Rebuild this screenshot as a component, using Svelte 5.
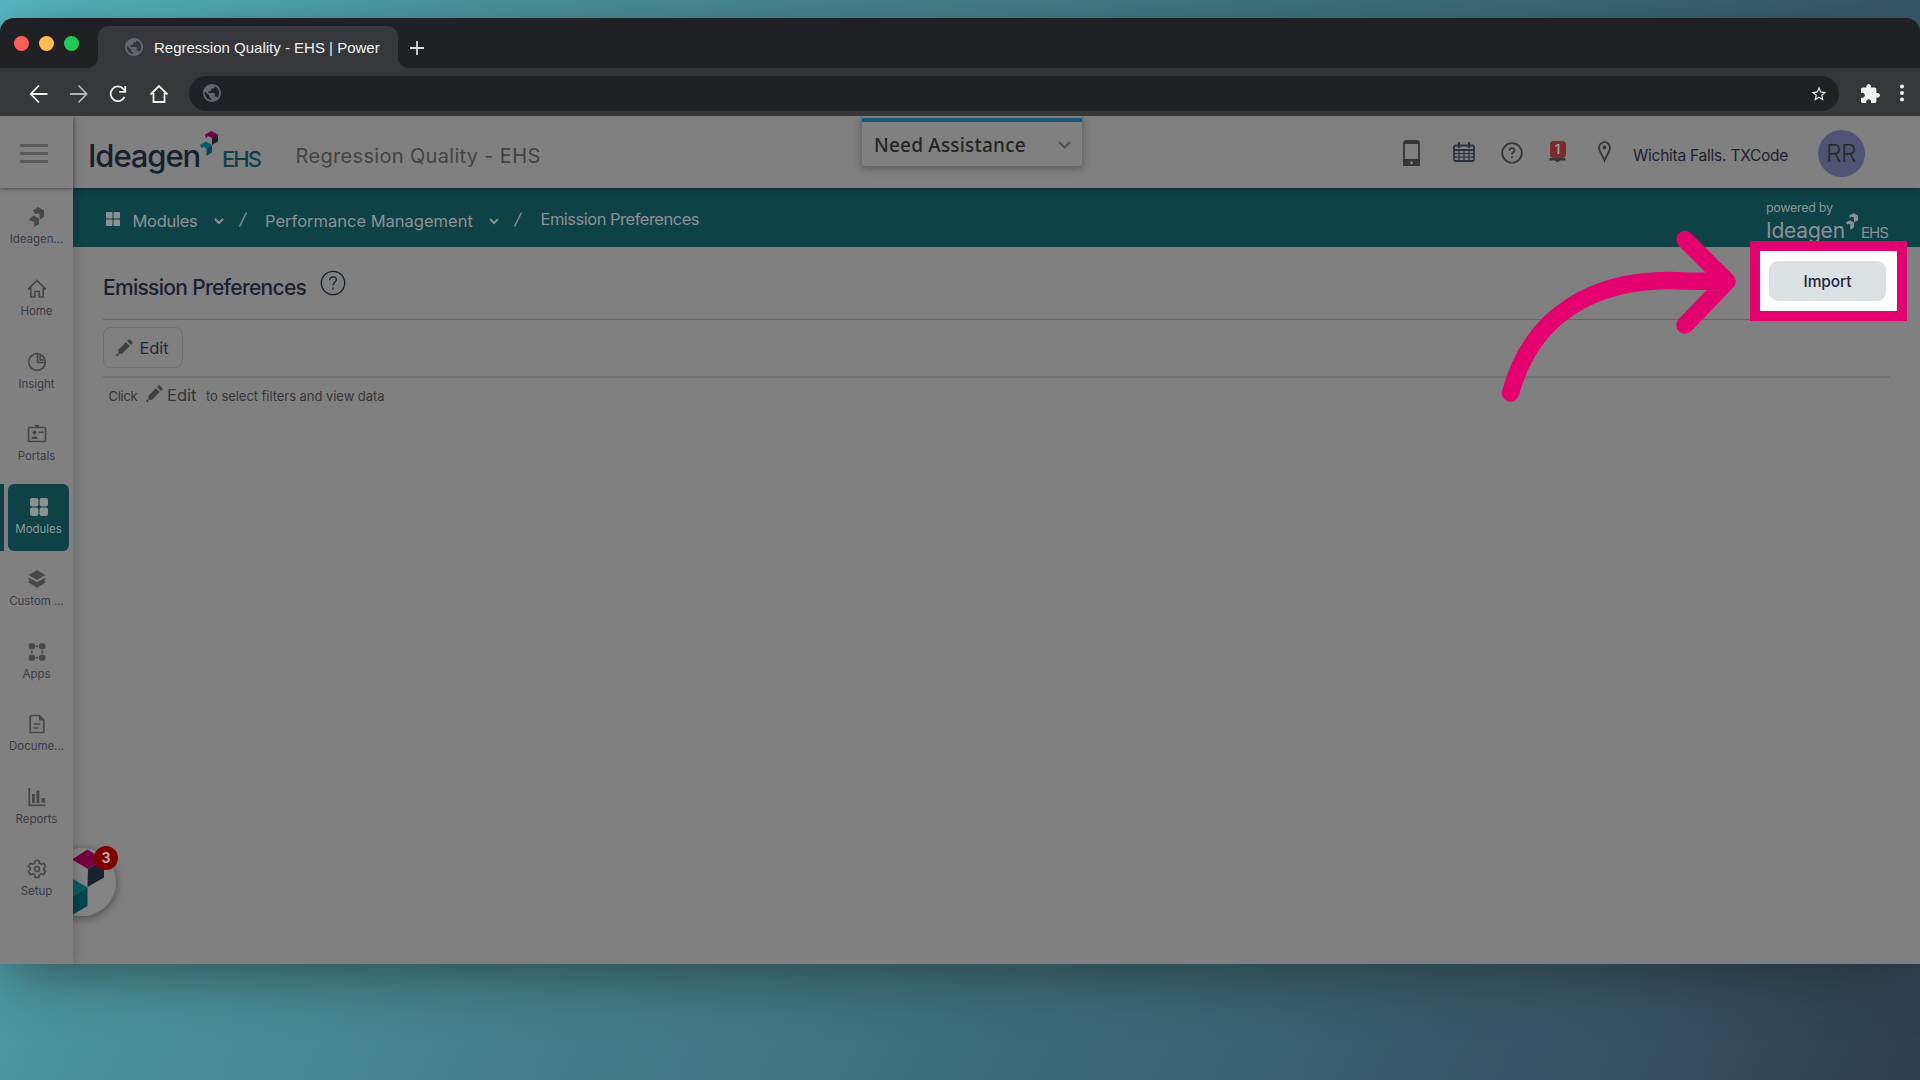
<script>
  let tabTitle = "Regression Quality - EHS | Power";
  let siteTitle = "Regression Quality - EHS";
  let siteName = "Wichita Falls. TXCode";

  const navItems = [
    { label: "Ideagen...", icon: "brand" },
    { label: "Home", icon: "home" },
    { label: "Insight", icon: "insight" },
    { label: "Portals", icon: "portals" },
    { label: "Modules", icon: "modules", active: true },
    { label: "Custom ...", icon: "layers" },
    { label: "Apps", icon: "apps" },
    { label: "Docume...", icon: "document" },
    { label: "Reports", icon: "reports" },
    { label: "Setup", icon: "setup" }
  ];
</script>

{#snippet globe()}
  <svg class="globe" viewBox="2 2 20 20">
    <path d="M12 2C6.48 2 2 6.48 2 12s4.48 10 10 10 10-4.48 10-10S17.52 2 12 2zm-1 17.93c-3.95-.49-7-3.85-7-7.93 0-.62.08-1.21.21-1.79L9 15v1c0 1.1.9 2 2 2v1.930zm6.900-2.540c-.26-.81-1-1.390-1.900-1.390h-1v-3c0-.55-.45-1-1-1H8v-2h2c.55 0 1-.45 1-1V7h2c1.100 0 2-.9 2-2v-.41c2.930 1.190 5 4.060 5 7.410 0 2.080-.8 3.970-2.100 5.390z" />
  </svg>
{/snippet}

{#snippet pencil()}
  <svg class="pencil" viewBox="0 0 18 18">
    <path d="M2.500 11.500 10.500 3.500l4 4-8 8H2.500z M11.700 2.300l1.800-1.800c.4-.4.9-.4 1.300 0l2.700 2.700c.4.4.4.9 0 1.300l-1.800 1.800z M.3 15.700h2.200v2.200H.3z" />
  </svg>
{/snippet}

{#snippet mark(kind)}
  <svg class="mark {kind}" viewBox="0 0 18 25">
    <path class="a" d="M5 3.500 11.500 0 18 3.500 12 7l-4-2-2 2.500z" />
    <path class="b" d="M12 7l6-3.500v7L12 14z" />
    <path class="c" d="M0 14l6-3.500L12 14l-5.500 3.500-3-1.500L2 17.500z" />
    <path class="d" d="M6.500 17.500 12 14v7.500L6.500 25z" />
  </svg>
{/snippet}

<div class="page">
  <div class="window">
    <div class="tabs">
      <div class="lights">
        <span class="red"></span>
        <span class="yellow"></span>
        <span class="green"></span>
      </div>
      <div class="tab">
        {@render globe()}
        <span>{tabTitle}</span>
      </div>
      <svg class="plus" viewBox="0 0 14 14"><path d="M7 0v14M0 7h14" /></svg>
    </div>

    <div class="toolbar">
      <svg class="tool" viewBox="0 0 20 20"><path d="M18.500 10H2.500M10 1.500 1.800 10l8.200 8.500" /></svg>
      <svg class="tool muted" viewBox="0 0 20 20"><path d="M1 10h16M9.500 1.500l8.200 8.500-8.200 8.500" /></svg>
      <svg class="tool" viewBox="0 0 20 20"><path d="M15.500 13a7.300 7.300 0 1 1-1.200-8.200L16 6.500M16.300 2v5.800h-6" /></svg>
      <svg class="tool" viewBox="0 0 20 20"><path d="M4.500 9v9h11V9M1.500 10.500 10 2l8.500 8.500" /></svg>
      <div class="address">
        {@render globe()}
        <svg class="star" viewBox="0 0 24 24"><path d="M22 9.240l-7.190-.62L12 2 9.190 8.630 2 9.240l5.460 4.730L5.820 21 12 17.270 18.180 21l-1.630-7.030L22 9.240zM12 15.400l-3.760 2.270 1-4.280-3.320-2.880 4.380-.38L12 6.100l1.710 4.040 4.380.38-3.320 2.880 1 4.280L12 15.400z" /></svg>
      </div>
      <svg class="puzzle" viewBox="2 1 21 21"><path d="M20.500 11H19V7c0-1.100-.9-2-2-2h-4V3.500C13 2.120 11.880 1 10.500 1S8 2.120 8 3.500V5H4c-1.100 0-1.990.9-1.990 2v3.800H3.500c1.490 0 2.700 1.210 2.700 2.700s-1.210 2.700-2.700 2.700H2V20c0 1.100.9 2 2 2h3.800v-1.500c0-1.490 1.210-2.700 2.700-2.700 1.490 0 2.700 1.210 2.700 2.700V22H17c1.100 0 2-.9 2-2v-4h1.500c1.380 0 2.500-1.120 2.500-2.500S21.880 11 20.500 11z" /></svg>
      <svg class="dots" viewBox="0 0 4 18"><circle cx="2" cy="2.5" r="2" /><circle cx="2" cy="9" r="2" /><circle cx="2" cy="15.5" r="2" /></svg>
    </div>

    <div class="app">
      <nav class="sidebar">
        <div class="toggle"><i></i><i></i><i></i></div>
        {#each navItems as item}
          <div class="nav-item" class:active={item.active}>
            <div class="nav-box">
              <svg class="nav-icon" viewBox="0 0 20 20">
                {#if item.icon === "brand"}
                  <path d="M6 3.500 11 0l6 3.500v6.200l-4.500 3V6.500L8 7z" />
                  <path d="M2 12.500l4.500-4 5.500 3.300V17l-4.700 3v-5.500L3 14z" />
                {:else if item.icon === "home"}
                  <path class="line" d="M1.200 10.200 10 1.500l8.800 8.700M3.800 8.500V18h4v-5.500h4.400V18h4V8.500M1.200 10.200h2.600M16.200 10.200h2.600" />
                {:else if item.icon === "insight"}
                  <circle class="line" cx="10" cy="10" r="8.300" />
                  <path class="line" d="M10.500 1.800v8.700h8M13.200 3v4.800h4.300" />
                {:else if item.icon === "portals"}
                  <rect class="line" x="1.500" y="3.500" width="17" height="14" rx="1" />
                  <path d="M8 1h4v3H8zM4.500 14.500c0-3 6-3 6 0v.5h-6zM11.500 7.500h5V9h-5z" />
                  <circle cx="7.500" cy="8.500" r="2" />
                {:else if item.icon === "modules"}
                  <rect x="1" y="1" width="8.400" height="8.400" rx="2" />
                  <rect x="10.600" y="1" width="8.400" height="8.400" rx="2" />
                  <rect x="1" y="10.600" width="8.400" height="8.400" rx="2" />
                  <rect x="10.600" y="10.600" width="8.400" height="8.400" rx="2" />
                {:else if item.icon === "layers"}
                  <path d="M10 1.200 18.500 6 10 11 1.500 6zM1.500 8.500 10 13.200l8.500-4.700v1.700L10 15.200l-8.500-5zM1.500 12l2-.8 6.500 3.800 6.500-3.800 2 .8v1.500L10 18.800l-8.500-5.300z" />
                {:else if item.icon === "apps"}
                  <path d="M3 1.300h3.500L8 2.800v3L6.500 7.300H3L1.500 5.800v-3zM13.500 1.300H17l1.500 1.500v3L17 7.300h-3.500L12 5.800v-3zM3 12.700h3.500L8 14.200v3l-1.500 1.500H3l-1.500-1.500v-3zM13.500 12.700H17l1.500 1.500v3L17 18.700h-3.500L12 17.200v-3z" />
                  <path class="line" d="M8.800 4.300h2.400M8.800 15.700h2.400M4.800 8.500v3M15.200 8.500v3" />
                {:else if item.icon === "document"}
                  <path class="line" d="M4.500 1.500h8l4.300 4.300v12.700H3.200V2.500z" />
                  <path d="M12 1l5.500 5.500H12z" />
                  <path class="line" d="M6.500 10h7M6.500 14h5" />
                {:else if item.icon === "reports"}
                  <path class="line" d="M2.300 1v17.300h16.200" />
                  <path d="M5 7h2.800v9H5zM9.500 3.500h2.800V16H9.500zM14.500 11h3.500v4.500h-3.500z" />
                {:else}
                  <path class="line" d="M8.200 1.500h3.600l.6 2.600 1.900 1.100 2.500-.8 1.800 3.100-1.900 1.800v1.400l1.900 1.800-1.800 3.100-2.500-.8-1.900 1.100-.6 2.600H8.200l-.6-2.600-1.900-1.100-2.500.8-1.800-3.100 1.900-1.800V9.300L1.400 7.500l1.800-3.100 2.500.8 1.900-1.100z" />
                  <circle class="line" cx="10" cy="10" r="2.500" />
                {/if}
              </svg>
              <span>{item.label}</span>
            </div>
          </div>
        {/each}
      </nav>

      <div class="body">
        <header class="header">
          <div class="logo">
            <span class="name">Ideagen</span>
            {@render mark("colour")}
            <span class="ehs">EHS</span>
          </div>
          <span class="site-title">{siteTitle}</span>

          <div class="header-icons">
            <svg class="phone" viewBox="0 0 17 26">
              <rect x="1" y="1" width="15" height="24" rx="2" />
              <path d="M1 3h15M6 2h5" />
              <path class="fill" d="M1 20h15v5H1z" />
              <circle cx="8.500" cy="22.700" r="1.500" />
            </svg>
            <svg class="calendar" viewBox="0 0 22 20">
              <rect x="1" y="3.500" width="20" height="15.500" rx="1.500" />
              <path d="M1 8h20M6 0v6M16 0v6" />
              <path class="thin" d="M1 11.500h20M1 15.200h20M6 8v11M11 8v11M16 8v11" />
            </svg>
            <svg class="help" viewBox="0 0 22 22">
              <circle cx="11" cy="11" r="9.800" />
              <path d="M8.300 8.800c.2-3.600 5.600-3.400 5.300-.2-.2 1.700-2.600 1.700-2.600 3.800M11 14.200v1.800" />
            </svg>
            <div class="bell">
              <span>1</span>
              <svg viewBox="0 0 17 5"><path d="M1 0h15l1 2.500h-6Q8.500 6 6 2.500H0z" /></svg>
            </div>
            <svg class="pin" viewBox="0 0 13 21">
              <path d="M6.500 19.500C4.500 13.500 1 11 1 6.700a5.500 5.500 0 0 1 11 0c0 4.300-3.500 6.800-5.500 12.800z" />
              <circle cx="6.500" cy="6.500" r="1" />
            </svg>
          </div>
          <span class="site-name">{siteName}</span>
          <div class="avatar">RR</div>

          <div class="assist">
            <span>Need Assistance</span>
            <svg viewBox="0 0 13 8"><path d="M1 1l5.500 5.500L12 1" /></svg>
          </div>
        </header>

        <div class="crumbs">
          <svg class="grid" viewBox="0 0 14 14">
            <rect width="6.500" height="6.500" rx="1" /><rect x="7.500" width="6.500" height="6.500" rx="1" />
            <rect y="7.500" width="6.500" height="6.500" rx="1" /><rect x="7.500" y="7.500" width="6.500" height="6.500" rx="1" />
          </svg>
          <span class="crumb first">Modules</span>
          <svg class="chev" viewBox="0 0 10 7"><path d="M1 1l4 4 4-4" /></svg>
          <svg class="slash" viewBox="0 0 8 15"><path d="M7.500.5l-7 14" /></svg>
          <span class="crumb second">Performance Management</span>
          <svg class="chev" viewBox="0 0 10 7"><path d="M1 1l4 4 4-4" /></svg>
          <svg class="slash" viewBox="0 0 8 15"><path d="M7.500.5l-7 14" /></svg>
          <span class="crumb last">Emission Preferences</span>
          <div class="powered">
            <small>powered by</small>
            <div class="powered-logo">
              <span class="name">Ideagen</span>
              {@render mark("plain")}
              <span class="ehs">EHS</span>
            </div>
          </div>
        </div>

        <main class="content">
          <div class="heading">
            <h1>Emission Preferences</h1>
            <svg viewBox="0 0 26 26">
              <circle cx="13" cy="13" r="11.700" />
              <path d="M9.700 10.200c.2-4.600 6.900-4.300 6.600-.3-.2 2.200-3.300 2.600-3.300 5.600M13 17.500v2" />
            </svg>
            <div class="spotlight">
              <button>Import</button>
            </div>
          </div>
          <div class="actions">
            <button class="edit">{@render pencil()}Edit</button>
          </div>
          <p class="hint">
            <span class="click">Click</span>
            {@render pencil()}
            <span class="word">Edit</span>
            <span class="rest">to select filters and view data</span>
          </p>
        </main>
      </div>

      <div class="chat">
        <svg viewBox="0 0 68 68">
          <circle cx="34" cy="34" r="34" />
          <path class="pink" d="M24 11.500 39.500 1.500l16 10L40 21z" />
          <path class="navy" d="M40 21l16-9.500v18L39.500 39z" />
          <path class="teal" d="M24 30.500l15.500 9L24 49z" />
          <path class="deep" d="M24 49l15.500-9.500V58L24 67z" />
        </svg>
        <b>3</b>
      </div>
    </div>
  </div>

  <svg class="arrow" viewBox="0 0 240 180">
    <path d="M10.500 163C31 87 92 46 185 51l42 .5M185 9.500 227 51.500l-42 43.500" />
  </svg>
</div>

<style>
  :global(body) {
    margin: 0;
    overflow: hidden;
  }
  .page {
    position: relative;
    box-sizing: border-box;
    width: 1920px;
    height: 1080px;
    padding-top: 18px;
    overflow: hidden;
    background: linear-gradient(114deg, #55b9c1 0%, #4a929b 22%, #3d6a79 62%, #365366 85%, #2f3e50 100%);
    font-family: Inter, "Open Sans", sans-serif;
  }
  svg {
    display: block;
    flex: none;
    overflow: visible;
  }
  span {
    white-space: nowrap;
  }
  .window {
    height: 946px;
    border-radius: 14px 14px 0 0;
    background: #202124;
    box-shadow: 0 14px 56px -6px rgba(30, 40, 35, 0.6);
  }

  /* browser chrome */
  .tabs {
    display: flex;
    height: 50px;
  }
  .lights {
    display: flex;
    gap: 10px;
    width: 84px;
    padding: 18px 0 0 14px;
  }
  .lights span {
    width: 15px;
    height: 15px;
    border-radius: 50%;
  }
  .red {
    background: #ff5f5a;
  }
  .yellow {
    background: #ffbd4c;
  }
  .green {
    background: #23c957;
  }
  .tab {
    position: relative;
    display: flex;
    align-items: center;
    box-sizing: border-box;
    width: 300px;
    height: 42px;
    margin-top: 8px;
    padding: 0 0 0 27px;
    border-radius: 10px 10px 0 0;
    background: #36373a;
    color: #f1f1f1;
    font: 15px/20px "Liberation Sans", Arial, sans-serif;
  }
  .tab::before,
  .tab::after {
    content: "";
    position: absolute;
    bottom: 0;
    width: 10px;
    height: 10px;
  }
  .tab::before {
    left: -10px;
    background: radial-gradient(circle at 0 0, #202124 9.5px, #36373a 10px);
  }
  .tab::after {
    right: -10px;
    background: radial-gradient(circle at 100% 0, #202124 9.5px, #36373a 10px);
  }
  .globe {
    width: 18px;
    height: 18px;
    fill: #63666a;
  }
  .tab span {
    margin: 2px 0 0 11px;
  }
  .plus {
    width: 14px;
    height: 14px;
    margin: 23px 0 0 12px;
    stroke: #dcdcdc;
    stroke-width: 1.8;
  }
  .toolbar {
    display: flex;
    align-items: center;
    height: 48px;
    padding-left: 29px;
    background: #36373a;
  }
  .tool {
    width: 20px;
    height: 20px;
    margin: 3px 20px 0 0;
    fill: none;
    stroke: #f1f1f1;
    stroke-width: 1.8;
  }
  .tool.muted {
    stroke: #b0b1b3;
  }
  .address {
    display: flex;
    align-items: center;
    justify-content: space-between;
    box-sizing: border-box;
    width: 1650px;
    height: 35px;
    margin-top: 2px;
    padding: 0 11px 0 14px;
    border-radius: 18px;
    background: #202124;
  }
  .star {
    width: 18px;
    height: 18px;
    margin-top: 1px;
    fill: #e8e8ea;
  }
  .puzzle {
    width: 19px;
    height: 19px;
    margin: 2px 0 0 22px;
    fill: #f1f1f3;
  }
  .dots {
    width: 4px;
    height: 18px;
    margin: 2px 0 0 20px;
    fill: #f1f1f3;
  }

  /* application */
  .app {
    position: relative;
    display: flex;
    height: 848px;
    overflow: hidden;
    background: #808080;
  }
  .sidebar {
    position: relative;
    z-index: 3;
    width: 73px;
    height: 848px;
    flex: none;
    background: #808080;
    box-shadow: 1px 0 10px rgba(0, 0, 0, 0.22);
  }
  .toggle {
    display: flex;
    flex-direction: column;
    gap: 5px;
    box-sizing: border-box;
    height: 72px;
    padding: 28px 0 0 20px;
    box-shadow: 0 1px 4px rgba(0, 0, 0, 0.4);
  }
  .toggle i {
    width: 28px;
    height: 3px;
    background: #5a5a5a;
  }
  .nav-item {
    position: relative;
    box-sizing: border-box;
    height: 72.5px;
    padding: 6px 4px 0;
  }
  .nav-item.active {
    padding-left: 8px;
  }
  .nav-item.active::before {
    content: "";
    position: absolute;
    left: 0;
    top: 6px;
    bottom: 0;
    width: 4px;
    background: #0f4246;
  }
  .nav-box {
    display: flex;
    flex-direction: column;
    align-items: center;
    box-sizing: border-box;
    height: 66.5px;
    padding-top: 12.5px;
    border-radius: 6px;
    color: #3a3d49;
    fill: #484848;
    font-size: 11.5px;
    line-height: 16px;
  }
  .nav-box span {
    margin-top: 4px;
    letter-spacing: -0.05px;
  }
  .active .nav-box {
    background: #0f4246;
    color: #8f9a9b;
    fill: #8c9293;
  }
  .nav-icon {
    width: 20px;
    height: 20px;
  }
  .nav-icon .line {
    fill: none;
    stroke: #484848;
    stroke-width: 1.7;
  }
  .body {
    width: 1847px;
    flex: none;
  }
  .header {
    position: relative;
    z-index: 2;
    display: flex;
    align-items: center;
    box-sizing: border-box;
    height: 72px;
    padding-left: 15px;
    background: #808080;
    box-shadow: 0 1px 8px rgba(0, 0, 0, 0.35);
  }
  .logo {
    display: flex;
    align-items: baseline;
    width: 207.5px;
    margin-top: 6px;
    color: #17202c;
  }
  .logo .name {
    width: 112px;
    font-size: 31px;
    font-weight: 500;
    letter-spacing: -1.1px;
  }
  .logo .mark {
    width: 18px;
    height: 25px;
    transform: translateY(-11px);
  }
  .logo .ehs {
    margin-left: 4px;
    color: #0c4247;
    font-size: 22px;
    font-weight: 500;
    letter-spacing: -2px;
  }
  .mark .a {
    fill: #730040;
  }
  .mark .b {
    fill: #1a212c;
  }
  .mark .c {
    fill: #065c68;
  }
  .mark .d {
    fill: #06454c;
  }
  .mark.plain path {
    fill: #8c9293;
  }
  .site-title {
    width: 1107.5px;
    margin-top: 8px;
    color: #444;
    font-size: 20px;
    letter-spacing: 0.33px;
  }
  .header-icons {
    display: flex;
    align-items: center;
    width: 230px;
    fill: none;
    stroke: #363636;
    stroke-width: 1.8;
  }
  .phone {
    width: 17px;
    height: 26px;
    margin-top: 2px;
  }
  .phone .fill {
    fill: #363636;
  }
  .phone circle {
    fill: #808080;
    stroke: none;
  }
  .calendar {
    width: 22px;
    height: 20px;
    margin-left: 32.5px;
    stroke: #2c333d;
  }
  .calendar .thin {
    stroke-width: 1.2;
  }
  .help {
    width: 22px;
    height: 22px;
    margin: 2px 0 0 26px;
  }
  .bell {
    display: flex;
    flex-direction: column;
    align-items: center;
    width: 17px;
    margin-left: 26.5px;
    fill: #363636;
    stroke: none;
  }
  .bell span {
    width: 16px;
    height: 17px;
    border-radius: 4px;
    background: #7c2b2b;
    color: #a79c9c;
    font-size: 13px;
    font-weight: 600;
    line-height: 16px;
    text-align: center;
  }
  .bell svg {
    width: 17px;
    height: 5px;
  }
  .pin {
    width: 13px;
    height: 21px;
    margin: -1px 0 0 31.5px;
  }
  .site-name {
    width: 184.5px;
    margin-top: 6px;
    color: #1c2230;
    font-size: 15.5px;
    letter-spacing: -0.24px;
  }
  .avatar {
    width: 47px;
    height: 47px;
    margin-top: 2px;
    border-radius: 50%;
    background: #505374;
    color: #2b2b20;
    font-size: 24.5px;
    font-weight: 300;
    line-height: 46px;
    text-align: center;
    letter-spacing: -0.5px;
  }
  .assist {
    position: absolute;
    left: 788px;
    top: 0;
    display: flex;
    align-items: center;
    justify-content: space-between;
    box-sizing: border-box;
    width: 222px;
    height: 51px;
    padding: 7px 11px 0 12px;
    border: 1px solid #696969;
    border-top: 0;
    border-radius: 0 0 4px 4px;
    background: #808080;
    box-shadow: 0 2px 8px rgba(0, 0, 0, 0.3);
    color: #242424;
    font: 500 19px/26px "Noto Sans", "Open Sans", sans-serif;
    letter-spacing: 0.2px;
  }
  .assist::before {
    content: "";
    position: absolute;
    left: 0;
    right: 0;
    top: 2px;
    height: 4px;
    background: #1d5576;
  }
  .assist svg {
    width: 13px;
    height: 8px;
    fill: none;
    stroke: #555;
    stroke-width: 2.4;
  }
  .crumbs {
    display: flex;
    align-items: center;
    height: 59px;
    padding-left: 32.5px;
    background: #0f4246;
    color: #8c9293;
    font-size: 16.5px;
    font-weight: 400;
  }
  .grid {
    width: 14px;
    height: 14px;
    margin-top: 3px;
    fill: #8c9293;
  }
  .crumb.first {
    width: 69px;
    margin: 7px 12px 0 13px;
    letter-spacing: -0.3px;
  }
  .crumb.second {
    width: 212px;
    margin: 7px 12px 0 18.5px;
  }
  .crumb.last {
    width: 1225.5px;
    margin: 2px 0 0 18.5px;
    letter-spacing: -0.5px;
  }
  .chev {
    width: 10px;
    height: 7px;
    margin: 7px 15px 0 0;
    fill: none;
    stroke: #8c9293;
    stroke-width: 2;
  }
  .slash {
    width: 8px;
    height: 15px;
    margin-top: 4px;
    stroke: #7f898a;
    stroke-width: 1.5;
  }
  .powered {
    height: 45px;
    margin-top: 11px;
  }
  .powered small {
    display: block;
    font-size: 12.5px;
    line-height: 14px;
    letter-spacing: -0.3px;
  }
  .powered-logo {
    display: flex;
    align-items: baseline;
    height: 28px;
    margin-top: 2px;
    line-height: 28px;
  }
  .powered-logo .name {
    width: 80px;
    font-size: 21px;
    letter-spacing: -0.2px;
  }
  .powered-logo .mark {
    width: 12px;
    height: 17px;
    transform: translateY(-8px);
  }
  .powered-logo .ehs {
    margin-left: 3px;
    font-size: 15px;
    letter-spacing: -1px;
  }
  .content {
    padding: 0 30px;
    color: #1a2130;
  }
  .heading {
    position: relative;
    display: flex;
    align-items: center;
    height: 72px;
    border-bottom: 1px solid #666;
  }
  h1 {
    width: 217px;
    margin: 8px 0 0;
    font-size: 21px;
    font-weight: 500;
    letter-spacing: -0.7px;
    white-space: nowrap;
  }
  .heading svg {
    width: 26px;
    height: 26px;
    fill: none;
    stroke: #1a2130;
    stroke-width: 1.3;
  }
  .spotlight {
    position: absolute;
    z-index: 4;
    top: -6px;
    right: -17px;
    box-sizing: border-box;
    width: 157px;
    height: 80px;
    padding: 10px 9px;
    border: 10px solid #e5006f;
    background: #fff;
  }
  button {
    font-family: inherit;
  }
  .spotlight button {
    width: 117px;
    height: 40px;
    padding: 0;
    border: 0;
    border-radius: 9px;
    background: #dbe0e3;
    color: #1f2a3c;
    font-size: 15.5px;
    font-weight: 450;
    letter-spacing: -0.1px;
  }
  .actions {
    box-sizing: border-box;
    height: 58px;
    padding-top: 7px;
    border-bottom: 2px solid #727272;
  }
  .edit {
    display: flex;
    align-items: center;
    gap: 7px;
    box-sizing: border-box;
    width: 80px;
    height: 41px;
    padding: 0 0 0 11.5px;
    border: 1px solid #6d7071;
    border-radius: 8px;
    background: transparent;
    color: #262b3a;
    font-size: 16.5px;
    letter-spacing: -0.1px;
  }
  .pencil {
    width: 17px;
    height: 17px;
    fill: #404040;
  }
  .hint {
    display: flex;
    height: 33px;
    align-items: center;
    margin: 0 0 0 5.5px;
    color: #363636;
    font-size: 13px;
  }
  .click {
    width: 37.5px;
    margin-top: 3px;
    letter-spacing: -0.3px;
  }
  .hint .pencil {
    margin-top: -2px;
  }
  .word {
    width: 39px;
    margin-left: 4px;
    font-size: 16.5px;
  }
  .rest {
    margin-top: 3px;
    letter-spacing: -0.05px;
  }

  /* launcher tucked under the sidebar */
  .chat {
    position: absolute;
    left: 48px;
    top: 732px;
    width: 68px;
    height: 68px;
    border-radius: 50%;
    box-shadow: 0 2px 10px rgba(0, 0, 0, 0.45);
    fill: #838383;
  }
  .chat b {
    position: absolute;
    left: 46px;
    top: -2.5px;
    width: 24px;
    height: 24px;
    border-radius: 50%;
    background: #800000;
    color: #b5a9a9;
    font-size: 14px;
    line-height: 24px;
    text-align: center;
  }
  .pink {
    fill: #730040;
  }
  .navy {
    fill: #1a212c;
  }
  .teal {
    fill: #065c62;
  }
  .deep {
    fill: #03444a;
  }
  .arrow {
    position: absolute;
    left: 1500px;
    top: 230px;
    width: 240px;
    height: 180px;
    fill: none;
    stroke: #e5006f;
    stroke-width: 17.5;
    stroke-linecap: round;
    stroke-linejoin: round;
  }
</style>
